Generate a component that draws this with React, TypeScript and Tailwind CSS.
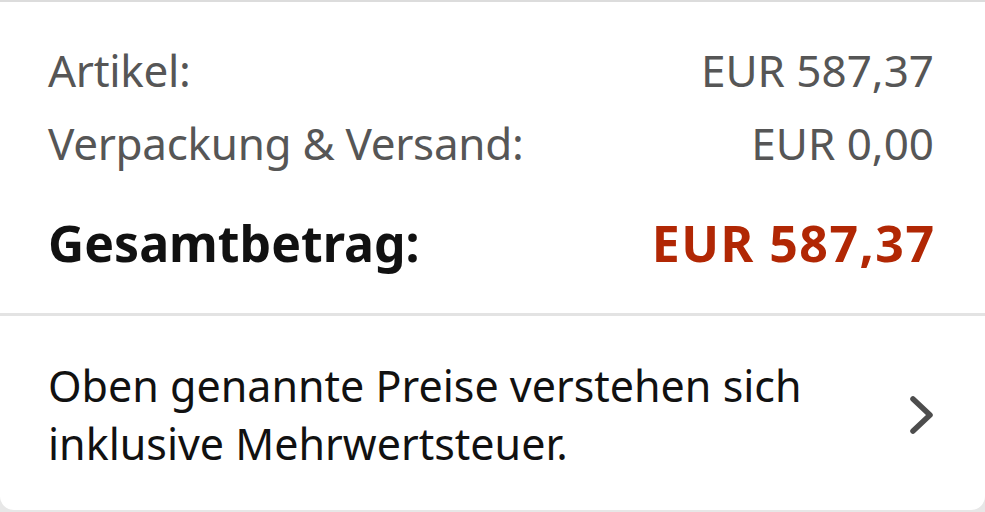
import React from 'react';

const rows = [
  { label: 'Artikel:', value: 'EUR 587,37' },
  { label: 'Verpackung & Versand:', value: 'EUR 0,00' },
];

export default function App() {
  return (
    <div className="w-[985px] h-[512px] bg-[#e7e7e7] overflow-hidden" style={{ fontFamily: '"Noto Sans", "Open Sans", sans-serif' }}>
      <div className="h-[510px] bg-white border-t-2 border-[#dcdcdc] rounded-b-[14px] flex flex-col">
        <div className="pl-12 pr-[51px] pt-[31px] pb-[6px] flex flex-col">
          {rows.map(r => (
            <div key={r.label} className="flex justify-between items-center h-[73px] text-[44px] text-[#565656] leading-none">
              <span className="tracking-[-0.3px]">{r.label}</span>
              <span>{r.value}</span>
            </div>
          ))}
          <div className="flex justify-between items-center h-[128px] text-[50px] font-bold leading-none">
            <span className="text-[#111]">Gesamtbetrag:</span>
            <span className="text-[#b12704] tracking-[1.5px] -mr-[1.5px]">EUR 587,37</span>
          </div>
        </div>
        <div className="h-[3px] bg-[#e3e3e3]" />
        <div className="flex items-center justify-between pl-12 pr-[50px] pt-[41px]">
          <p className="text-[43px] leading-[58px] text-[#111] w-[820px]">
            Oben genannte Preise verstehen sich inklusive Mehrwertsteuer.
          </p>
          <svg width="26" height="40" viewBox="0 0 26 40" fill="none" stroke="#4d4d4d" strokeWidth="5.5" strokeLinecap="round" strokeLinejoin="round">
            <path d="M4 4 L21 20 L4 36" />
          </svg>
        </div>
      </div>
    </div>
  );
}
